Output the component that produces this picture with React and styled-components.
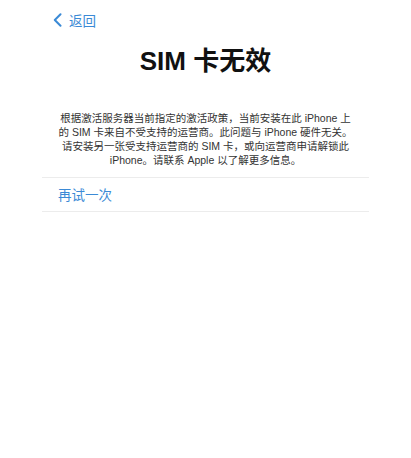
import React from "react";
import styled, { createGlobalStyle } from "styled-components";

const GlobalStyle = createGlobalStyle`
  html, body {
    margin: 0;
    padding: 0;
    background: #ffffff;
  }
  body {
    font-family: "Liberation Sans", "Noto Sans CJK SC", sans-serif;
  }
`;

const Page = styled.div`
  width: 411px;
  min-height: 458px;
  background: #ffffff;
`;

const NavBar = styled.div`
  display: flex;
  align-items: center;
  height: 40px;
  padding-left: 53px;
`;

const BackButton = styled.button`
  display: flex;
  align-items: center;
  gap: 7px;
  padding: 0;
  border: none;
  background: none;
  color: #3b8ad6;
  font-family: "Noto Sans CJK SC", sans-serif;
  font-size: 13.5px;
  cursor: pointer;
`;

const Title = styled.h1`
  margin: 4px 0 0;
  text-align: center;
  font-family: "Liberation Sans", "Noto Sans CJK SC", sans-serif;
  font-weight: 700;
  font-size: 26px;
  line-height: 34px;
  color: #111111;
`;

const Description = styled.p`
  margin: 33px 0 0;
  text-align: center;
  font-family: "Liberation Sans", "Noto Sans CJK SC", sans-serif;
  font-size: 10.5px;
  line-height: 14px;
  color: #333333;
`;

const ActionList = styled.div`
  margin: 10px 42px 0;
  border-top: 1px solid #ececec;
  border-bottom: 1px solid #ececec;
`;

const ActionRow = styled.button`
  display: block;
  width: 100%;
  height: 33px;
  padding: 0 0 1px 16px;
  border: none;
  background: none;
  text-align: left;
  font-family: "Noto Sans CJK SC", sans-serif;
  font-size: 13.5px;
  color: #3b8ad6;
  cursor: pointer;
`;

function Chevron() {
  return (
    <svg width="9" height="14" viewBox="0 0 9 14">
      <path
        d="M7.5 1.2 L1.8 7 L7.5 12.8"
        fill="none"
        stroke="#3b8ad6"
        strokeWidth="2"
        strokeLinecap="round"
        strokeLinejoin="round"
      />
    </svg>
  );
}

export default function App() {
  return (
    <Page>
      <GlobalStyle />
      <NavBar>
        <BackButton>
          <Chevron />
          <span>返回</span>
        </BackButton>
      </NavBar>
      <Title>SIM 卡无效</Title>
      <Description>
        根据激活服务器当前指定的激活政策，当前安装在此 iPhone 上
        <br />
        的 SIM 卡来自不受支持的运营商。此问题与 iPhone 硬件无关。
        <br />
        请安装另一张受支持运营商的 SIM 卡，或向运营商申请解锁此
        <br />
        iPhone。请联系 Apple 以了解更多信息。
      </Description>
      <ActionList>
        <ActionRow>再试一次</ActionRow>
      </ActionList>
    </Page>
  );
}
